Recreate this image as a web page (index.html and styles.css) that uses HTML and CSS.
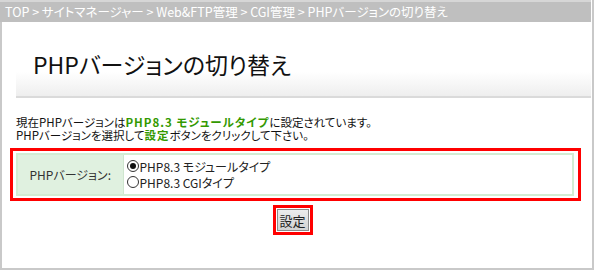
FILE: index.html
```html
<!DOCTYPE html>
<html lang="ja">

<head>
    <meta charset="utf-8">
    <title>PHPバージョンの切り替え</title>

    <link rel="stylesheet" href="styles.css">

</head>

<body>

    <div class="frame">

        <div class="breadcrumb">TOP &gt; サイトマネージャー &gt; Web&amp;FTP管理 &gt; CGI管理 &gt; PHPバージョンの切り替え</div>

        <div class="title-band">
            <h1 class="title">PHPバージョンの切り替え</h1>
        </div>

        <p class="note">
            現在PHPバージョンは<strong>PHP8.3 モジュールタイプ</strong>に設定されています。<br>
            PHPバージョンを選択して<strong>設定</strong>ボタンをクリックして下さい。
        </p>

        <form class="form">

            <div class="highlight">
                <table class="settings">
                    <tr>
                        <th>PHPバージョン:</th>
                        <td>
                            <label class="option"><input type="radio" name="php" checked>PHP8.3 モジュールタイプ</label>
                            <label class="option"><input type="radio" name="php">PHP8.3 CGIタイプ</label>
                        </td>
                    </tr>
                </table>
            </div>

            <div class="actions">
                <span class="submit-mark">
                    <button type="button" class="submit">設定</button>
                </span>
            </div>

        </form>

    </div>

</body>

</html>
```

FILE: styles.css
```css
* {
    padding: 0;
    margin: 0;
    box-sizing: border-box;
}

body {
    background: #fff;
    font-family: "Noto Sans CJK JP", "Liberation Sans", sans-serif;
    font-size: 12px;
    color: #222;
    font-feature-settings: "palt";
}

.frame {
    width: 594px;
    height: 270px;
    border: 2px solid #c9c9c9;
    border-top: none;
    padding-right: 1px;
}

.breadcrumb {
    height: 22px;
    margin-left: -2px;
    padding-left: 5px;
    background: #bfbfbf;
    border-top: 2px solid #d6d6d6;
    color: #fff;
    font-size: 12.5px;
    line-height: 20px;
    white-space: nowrap;
}

.title-band {
    margin: 20px 0 0 14px;
    padding: 5px 0 15px 17px;
    background: linear-gradient(#fff 55%, #eeeeee);
    border-bottom: 2px solid #dadada;
}

.title {
    font-size: 23px;
    font-weight: normal;
    line-height: 34px;
    color: #111;
}

.note {
    margin: 18px 0 0 14px;
    font-size: 11.5px;
    line-height: 13px;
    color: #111;
}

.note strong {
    color: #339900;
    letter-spacing: 1px;
}

.highlight {
    margin: 6px 0 0 8px;
    width: 571px;
    border: 3px solid #ff0000;
    padding: 2px 4px 2px 3px;
}

.settings {
    width: 100%;
    border-collapse: collapse;
    border: 2px solid #d3ecd3;
}

.settings th {
    width: 106px;
    background: #e0f1e0;
    border-right: 1px solid #cfe6cf;
    font-weight: normal;
    color: #333;
    text-align: center;
}

.settings td {
    padding: 3px 0 4px 3px;
}

.option {
    display: flex;
    align-items: center;
    height: 16px;
    color: #222;
}

.option input {
    appearance: none;
    width: 12px;
    height: 12px;
    margin-right: 1px;
    border: 1px solid #333;
    border-radius: 50%;
    background: #fff;
    display: grid;
    place-items: center;
}

.option input:checked::after {
    content: "";
    width: 6px;
    height: 6px;
    border-radius: 50%;
    background: #111;
}

.actions {
    display: flex;
    justify-content: center;
    width: 581px;
    margin-top: 4px;
}

.submit-mark {
    border: 3px solid #ff0000;
    padding: 1px;
}

.submit {
    display: block;
    width: 32px;
    height: 22px;
    background: linear-gradient(#ececec, #d2d2d2);
    border: 1px solid #8a8a8a;
    font-family: inherit;
    font-size: 13px;
    color: #222;
    cursor: pointer;
}
```
